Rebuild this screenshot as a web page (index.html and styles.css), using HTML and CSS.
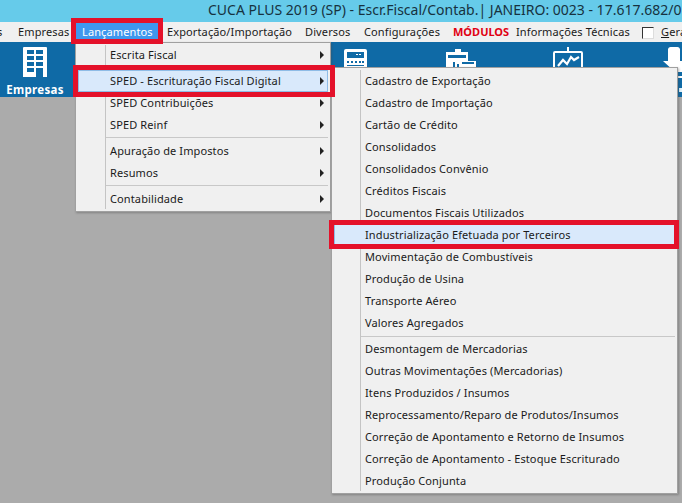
FILE: index.html
```html
<!DOCTYPE html>
<html lang="pt">
<head>
<meta charset="utf-8">
<title>CUCA PLUS</title>
<link rel="stylesheet" href="styles.css">
</head>
<body>
<div class="app">
  <header class="title"><span class="title-text">CUCA PLUS 2019 (SP) - Escr.Fiscal/Contab.| JANEIRO: 0023 - 17.617.682/0</span></header>
  <nav class="menubar">
    <span class="mi m-s">s</span>
    <span class="mi m-emp">Empresas</span>
    <span class="mi m-lanc">Lançamentos</span>
    <span class="mi m-exp">Exportação/Importação</span>
    <span class="mi m-div">Diversos</span>
    <span class="mi m-conf">Configurações</span>
    <span class="mi m-mod">MÓDULOS</span>
    <span class="mi m-info">Informações Técnicas</span>
    <span class="check"></span>
    <span class="mi m-ger"><u>G</u>era</span>
  </nav>
  <section class="toolbar">
    <div class="tool tool-emp">
      <svg width="24" height="30" viewBox="0 0 24 30"><path fill="#fff" d="M0 1a1 1 0 0 1 1-1h22a1 1 0 0 1 1 1v29H0z"/><path fill="#0f6aa6" d="M4 3h7v4H4zM13 3h7v4h-7zM4 9h7v4H4zM13 9h7v4h-7zM4 15h7v4H4zM13 15h7v4h-7zM4 21h7v4H4zM13 21h7v9h-7z"/></svg>
      <span>Empresas</span>
    </div>
    <svg class="ti ti-calc" width="23" height="25" viewBox="0 0 23 25"><path fill="#fff" d="M2 0h19a2 2 0 0 1 2 2v23H0V2a2 2 0 0 1 2-2z"/><path fill="#0f6aa6" d="M3 3h17v6H3zM3 12h2v2H3zM7 12h2v2H7zM11 12h2v2h-2zM15 12h2v2h-2zM18 12h2v2h-2zM3 16h17v1H3z"/><path fill="#fff" d="M12 5h2v1h-2zM15 5h2v1h-2z"/></svg>
    <svg class="ti ti-clip" width="30" height="25" viewBox="0 0 30 25"><path fill="#fff" d="M0 3h9V0h6v3h7v9h8v13H0z"/><path fill="#0f6aa6" d="M2 6h18v3H2zM5 18h2v-5h2v5h2v-3h2v3h2v2H5zM16 13h12v2H16zM18 18h8v5h-8z"/></svg>
    <svg class="ti ti-chart" width="32" height="25" viewBox="0 0 32 25"><path fill="none" stroke="#fff" stroke-width="2" d="M3 5h26a1 1 0 0 1 1 1v19M2 25V6a1 1 0 0 1 1-1"/><path fill="#fff" d="M15 0h2v5h-2z"/><path fill="none" stroke="#fff" stroke-width="2.2" d="M6 19l5-6 4 4 4-7 3 3 5-3"/></svg>
    <svg class="ti ti-down" width="19" height="25" viewBox="0 0 19 25"><path fill="#fff" d="M5 2a3 3 0 0 1 3-2h6a3 3 0 0 1 3 2v12h2v11H12L0 14h5z"/></svg>
    <svg class="ti ti-edge" width="4" height="20" viewBox="0 0 4 20"><path fill="#fff" d="M0 0h4v2H0z"/><path fill="#dff2fb" d="M1 12h3v4H1z"/></svg>
  </section>
  <main class="desk"></main>

  <div class="menu menu-a">
    <div class="row"><span>Escrita Fiscal</span><i class="arrow"></i></div>
    <div class="sep"></div>
    <div class="row hl"><span>SPED - Escrituração Fiscal Digital</span><i class="arrow"></i></div>
    <div class="row"><span>SPED Contribuições</span><i class="arrow"></i></div>
    <div class="row"><span>SPED Reinf</span><i class="arrow"></i></div>
    <div class="sep"></div>
    <div class="row"><span>Apuração de Impostos</span><i class="arrow"></i></div>
    <div class="row"><span>Resumos</span><i class="arrow"></i></div>
    <div class="sep"></div>
    <div class="row"><span>Contabilidade</span><i class="arrow"></i></div>
  </div>

  <div class="menu menu-b">
    <div class="row"><span>Cadastro de Exportação</span></div>
    <div class="row"><span>Cadastro de Importação</span></div>
    <div class="row"><span>Cartão de Crédito</span></div>
    <div class="row"><span>Consolidados</span></div>
    <div class="row"><span>Consolidados Convênio</span></div>
    <div class="row"><span>Créditos Fiscais</span></div>
    <div class="row"><span>Documentos Fiscais Utilizados</span></div>
    <div class="row hl"><span>Industrialização Efetuada por Terceiros</span></div>
    <div class="row"><span>Movimentação de Combustíveis</span></div>
    <div class="row"><span>Produção de Usina</span></div>
    <div class="row"><span>Transporte Aéreo</span></div>
    <div class="row"><span>Valores Agregados</span></div>
    <div class="sep"></div>
    <div class="row"><span>Desmontagem de Mercadorias</span></div>
    <div class="row"><span>Outras Movimentações (Mercadorias)</span></div>
    <div class="row"><span>Itens Produzidos / Insumos</span></div>
    <div class="row"><span>Reprocessamento/Reparo de Produtos/Insumos</span></div>
    <div class="row"><span>Correção de Apontamento e Retorno de Insumos</span></div>
    <div class="row"><span>Correção de Apontamento - Estoque Escriturado</span></div>
    <div class="row"><span>Produção Conjunta</span></div>
  </div>

  <div class="mark mark-lanc"></div>
  <div class="mark mark-sped"></div>
  <div class="mark mark-ind"></div>
</div>
</body>
</html>
```
FILE: styles.css
```css
* { box-sizing: border-box; }
html, body { margin: 0; padding: 0; }
body { font-family: "Noto Sans", "DejaVu Sans", sans-serif; font-size: 11px; letter-spacing: .12px; color: #1a1a1a; overflow: hidden; }
.app { position: relative; width: 682px; height: 503px; display: flex; flex-direction: column; background: #ababab; overflow: hidden; }

.title { height: 22px; background: #66cbea; flex: none; white-space: nowrap; position: relative; overflow: hidden; }
.title-text { position: absolute; left: 208px; top: 0; font-size: 14px; line-height: 20px; letter-spacing: 0; color: #17323f; }

.menubar { height: 20px; background: #f0f0f0; flex: none; position: relative; white-space: nowrap; overflow: hidden; }
.mi { position: absolute; top: 1px; line-height: 18px; }
.m-s { left: -3px; }
.m-emp { left: 18px; }
.m-lanc { left: 76px; top: 0; width: 82px; height: 19px; padding: 1px 0 0 6px; background: #3f97ee; color: #fff; }
.m-exp { left: 167px; }
.m-div { left: 305px; }
.m-conf { left: 364px; }
.m-mod { left: 453px; font-weight: 700; letter-spacing: 0; color: #e00012; }
.m-info { left: 516px; }
.check { position: absolute; left: 642px; top: 5px; width: 12px; height: 12px; background: #fff; border: 1px solid #333; border-right-color: #ddd; border-bottom-color: #ddd; }
.m-ger { left: 661px; }

.toolbar { height: 55px; background: #0f6aa6; flex: none; position: relative; }
.tool { width: 70px; height: 55px; display: flex; flex-direction: column; align-items: center; padding-top: 5px; color: #fff; font-weight: 700; font-size: 11.5px; line-height: 13px; letter-spacing: .3px; }
.tool span { margin-top: 6px; }
.ti { position: absolute; top: 7px; }
.ti-calc { left: 344px; }
.ti-clip { left: 446px; }
.ti-chart { left: 552px; top: 5px; }
.ti-down { left: 663px; top: 5px; }
.ti-edge { left: 678px; top: 34px; }
.desk { flex: 1; background: #ababab; }

.menu { position: absolute; background: #f0f0f0; border: 1px solid #a0a0a0; padding: 2px; box-shadow: 1px 1px 2px rgba(70,70,70,.4); }
.menu::before { content: ""; position: absolute; top: 2px; bottom: 2px; width: 1px; background: #c4c4c4; }
.menu-a { left: 75px; top: 42px; width: 256px; height: 170px; padding-top: 1px; }
.menu-a::before { left: 29px; }
.menu-b { left: 331px; top: 67px; width: 347px; height: 427px; }
.menu-b::before { left: 28px; }
.row { position: relative; height: 22px; display: flex; align-items: center; justify-content: space-between; padding: 0 8px 0 32px; white-space: nowrap; line-height: 22px; }
.menu-a .row { padding-right: 4px; }
.menu-b .row { padding-left: 31px; }
.row.hl { background: #d9e9fb; outline: 1px solid #8fbce6; outline-offset: -1px; }
.sep { position: relative; height: 4px; margin: 0 0 0 28px; }
.menu-a .sep::after { top: 1px; }
.menu-b .sep { margin-left: 27px; }
.sep::after { content: ""; position: absolute; left: 0; right: 0; top: 2px; height: 1px; background: #c8c8c8; }
.arrow { width: 0; height: 0; border-left: 4px solid #222; border-top: 4px solid transparent; border-bottom: 4px solid transparent; }

.mark { position: absolute; border: 5px solid #e4112a; pointer-events: none; }
.mark-lanc { left: 71px; top: 18px; width: 92px; height: 26px; }
.mark-sped { left: 73px; top: 65px; width: 262px; height: 32px; }
.mark-ind { left: 329px; top: 220px; width: 350px; height: 29px; }
```
